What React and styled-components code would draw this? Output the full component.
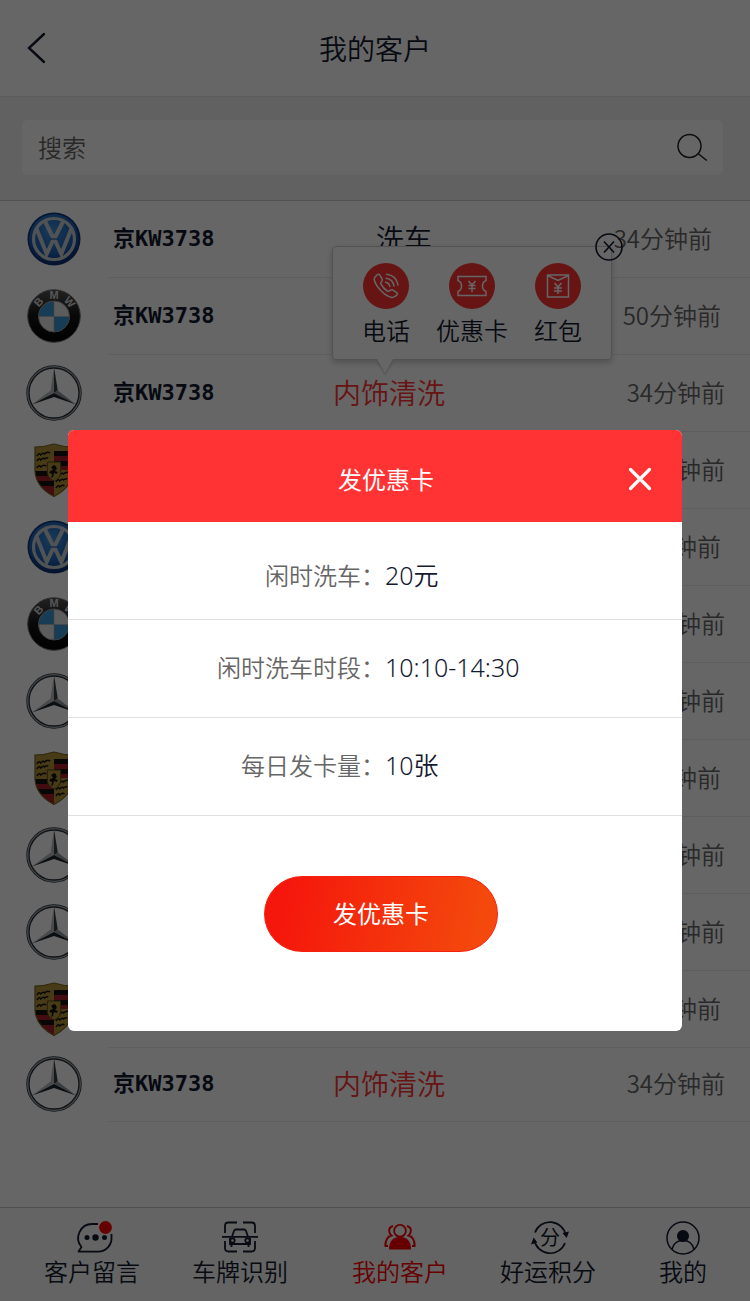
import React from 'react';
import styled, { createGlobalStyle } from 'styled-components';

const cjk = '"Noto Sans CJK SC", sans-serif';
const ink = '#141a30';

const GlobalStyle = createGlobalStyle`
  *, *::before, *::after { box-sizing: border-box; }
  body {
    margin: 0;
    background: #fff;
    color: ${ink};
    font-family: ${cjk};
    font-weight: 350;
  }
  button, input { font: inherit; color: inherit; }
  button { padding: 0; border: 0; background: none; cursor: pointer; }
  svg { display: block; }
`;

const Screen = styled.div`
  position: relative;
  display: flex;
  flex-direction: column;
  min-height: 100vh;
`;

const TopBar = styled.header`
  display: grid;
  grid-template-columns: 1fr auto 1fr;
  align-items: center;
  height: 97px;
  padding: 0 24px;
  border-bottom: 1px solid #e6e6e6;
`;

const PageTitle = styled.h1`
  margin: 0;
  font-size: 28px;
  font-weight: 350;
  line-height: 40px;
`;

const BackButton = styled.button`
  justify-self: start;
`;

const SearchArea = styled.form`
  padding: 23px 27px 25px 22px;
  background: #f3f3f3;
  border-bottom: 1px solid #cfcfcf;
`;

const SearchBox = styled.div`
  display: flex;
  align-items: center;
  height: 55px;
  padding: 0 15px 2px 16px;
  border-radius: 6px;
  background: #fff;
`;

const SearchInput = styled.input`
  flex: 1;
  min-width: 0;
  padding: 0;
  border: 0;
  outline: 0;
  background: transparent;
  font-size: 24px;
  &::placeholder { color: #666; opacity: 1; }
`;

const List = styled.ul`
  flex: 1;
  margin: 0;
  padding: 0 0 85px;
  list-style: none;
`;

const Row = styled.li`
  position: relative;
  display: flex;
  height: 77px;
  &:last-child { height: 74px; }
`;

const LogoCell = styled.div`
  display: flex;
  align-items: center;
  justify-content: center;
  width: 108px;
  padding-bottom: 2px;
`;

const RowBody = styled.div`
  flex: 1;
  display: grid;
  grid-template-columns: 220px 1fr auto;
  align-items: center;
  padding: 0 ${p => p.$inset}px 3px 5px;
  border-bottom: 1px solid #ebebeb;
  line-height: 36px;
`;

const Plate = styled.span`
  padding-top: 2px;
  font-family: "DejaVu Sans Mono", ${cjk};
  font-size: 22px;
  font-weight: 700;
`;

const Service = styled.span`
  padding-left: ${p => (p.$short ? 43 : 0)}px;
  font-size: 28px;
  color: ${p => (p.$short ? ink : '#ff3333')};
`;

const Time = styled.time`
  font-size: 24px;
  color: #666;
`;

const Popover = styled.div`
  position: absolute;
  left: 332px;
  bottom: 72px;
  z-index: 1;
  width: 280px;
  height: 114px;
  border: 1px solid #ccc;
  border-radius: 4px;
  background: #fff;
  box-shadow: 0 3px 6px rgba(0, 0, 0, 0.2);
  &::after {
    content: '';
    position: absolute;
    left: 44px;
    top: 112px;
    border: 8px solid transparent;
    border-top: 14px solid #fff;
    border-bottom: 0;
    filter: drop-shadow(0 2px 1px rgba(0, 0, 0, 0.2));
  }
`;

const PopoverActions = styled.div`
  display: flex;
  justify-content: space-between;
  padding: 16px 29px 0;
`;

const PopoverAction = styled.button`
  display: flex;
  flex-direction: column;
  align-items: center;
  gap: 5px;
  font-size: 24px;
  line-height: 32px;
`;

const PopoverIcon = styled.span`
  display: grid;
  place-items: center;
  width: 46px;
  height: 46px;
  border-radius: 50%;
  background: #ff3333;
`;

const PopoverClose = styled.button`
  position: absolute;
  right: -12px;
  top: -14px;
`;

const TabBar = styled.nav`
  display: grid;
  grid-template-columns: 136fr 160fr 160fr 136fr 134fr;
  height: 94px;
  padding: 13px 0 0 24px;
  border-top: 1px solid #c4c4c4;
  background: #fafafa;
`;

const Tab = styled.a`
  display: flex;
  flex-direction: column;
  align-items: center;
  gap: 2px;
  color: ${p => (p.$active ? '#ff0000' : ink)};
  font-size: 24px;
  line-height: 32px;
  text-decoration: none;
  white-space: nowrap;
`;

const TabIcon = styled.span`
  display: grid;
  place-items: center;
  height: 32px;
`;

const Overlay = styled.div`
  position: absolute;
  inset: 0;
  z-index: 2;
  padding: 430px 68px 0;
  background: rgba(0, 0, 0, 0.6);
`;

const Dialog = styled.section`
  overflow: hidden;
  border-radius: 6px;
  background: #fff;
`;

const DialogHeader = styled.header`
  display: grid;
  grid-template-columns: 1fr auto 1fr;
  align-items: center;
  height: 92px;
  padding: 6px 30px 0 52px;
  background: #ff3333;
  color: #fff;
`;

const DialogTitle = styled.h2`
  grid-column: 2;
  margin: 0;
  font-size: 24px;
  font-weight: 400;
  line-height: 36px;
`;

const DialogClose = styled.button`
  justify-self: end;
`;

const Details = styled.dl`
  margin: 0;
`;

const Detail = styled.div`
  display: grid;
  grid-template-columns: 317fr 297fr;
  align-items: center;
  height: 98px;
  padding-bottom: 3px;
  border-bottom: 1px solid #e0e0e0;
  line-height: 36px;
  &:first-child { padding-top: 12px; }
`;

const DetailLabel = styled.dt`
  font-size: 24px;
  color: #666;
  text-align: right;
`;

const DetailValue = styled.dd`
  margin: 0;
  font-family: "Noto Sans", ${cjk};
  font-size: 25px;
`;

const DialogFooter = styled.footer`
  display: flex;
  justify-content: center;
  padding: 60px 0 79px 12px;
`;

const SendButton = styled.button`
  width: 234px;
  height: 76px;
  padding-bottom: 3px;
  border: 1px solid #f5200f;
  border-radius: 38px;
  background: linear-gradient(100deg, #f5170c 10%, #f4480c 90%);
  color: #fff;
  font-size: 24px;
  font-weight: 400;
`;

function VwLogo() {
  return (
    <svg width="54" height="54" viewBox="0 0 54 54" aria-hidden="true">
      <defs>
        <radialGradient id="vwBlue" cx=".45" cy=".35" r=".65">
          <stop offset="0" stopColor="#3f92dd" />
          <stop offset=".7" stopColor="#1c5fb4" />
          <stop offset="1" stopColor="#0c2f70" />
        </radialGradient>
      </defs>
      <circle cx="27" cy="27" r="26.5" fill="#0d3478" />
      <circle cx="27" cy="27" r="25" fill="url(#vwBlue)" />
      <circle cx="27" cy="27" r="20.5" fill="none" stroke="#c9cdd2" strokeWidth="3.2" />
      <g fill="none" stroke="#c9cdd2" strokeWidth="4" strokeLinejoin="miter">
        <path d="M17.500 8.500L26 25.500h2L36.500 8.500" />
        <path d="M9.500 16.500L19.700 42L26 28.500h2L34.300 42L44.500 16.500" />
      </g>
      <path d="M23 27h8" stroke="#1c5fb4" strokeWidth="1.200" />
    </svg>
  );
}

function BmwLogo() {
  return (
    <svg width="54" height="54" viewBox="0 0 54 54" aria-hidden="true">
      <defs>
        <linearGradient id="bmwRing" x1="0" y1="0" x2="0" y2="1">
          <stop offset="0" stopColor="#555" />
          <stop offset=".5" stopColor="#151515" />
          <stop offset="1" stopColor="#050505" />
        </linearGradient>
      </defs>
      <circle cx="27" cy="27" r="26.300" fill="url(#bmwRing)" stroke="#777" strokeWidth="1" />
      <circle cx="27" cy="27.500" r="15.500" fill="#e6e6e6" />
      <path d="M27 27.500V12A15.500 15.500 0 0 0 11.500 27.500z M27 27.500V43A15.500 15.500 0 0 0 42.500 27.500z" fill="#3a97d8" />
      <path d="M27 12v31M11.500 27.500h31" stroke="#aaa" strokeWidth=".7" />
      <circle cx="27" cy="27.500" r="15.500" fill="none" stroke="#999" />
      <g fill="#d8d8d8" fontFamily="Liberation Sans" fontWeight="700" fontSize="11" textAnchor="middle">
        <text x="27" y="10">M</text>
        <text x="27" y="10" transform="rotate(-48 27 27)">B</text>
        <text x="27" y="10" transform="rotate(48 27 27)">W</text>
      </g>
    </svg>
  );
}

function BenzLogo() {
  return (
    <svg width="56" height="56" viewBox="0 0 56 56" aria-hidden="true">
      <circle cx="28" cy="28" r="26" fill="none" stroke="#2b3238" strokeWidth="3.400" />
      <circle cx="28" cy="28" r="26.300" fill="none" stroke="#a9afb4" strokeWidth="1.300" />
      <path d="M28 2L24.600 25.500L28 28z" fill="#b4b8bb" />
      <path d="M28 2L31.800 25.500L28 28z" fill="#3a4147" />
      <path d="M6 39.500L24.600 25.500L28 28z" fill="#b4b8bb" />
      <path d="M6 39.500L28 32L28 28z" fill="#1f262c" />
      <path d="M50 39.500L31.800 25.500L28 28z" fill="#92989d" />
      <path d="M50 39.500L28 32L28 28z" fill="#1f262c" />
    </svg>
  );
}

function PorscheLogo() {
  return (
    <svg width="40" height="54" viewBox="0 0 42 54" preserveAspectRatio="none" aria-hidden="true">
      <defs>
        <clipPath id="crest">
          <path d="M1 4Q11 4 21 1Q31 4 41 4V28Q40 44 21 53.500Q2 44 1 28z" />
        </clipPath>
      </defs>
      <g clipPath="url(#crest)">
        <path d="M0 0h42v54H0z" fill="#b0923a" />
        <path d="M21 8h21v5H21zM21 18h21v5H21zM0 28h21v5H0zM0 38h21v5H0z" fill="#17130e" />
        <path d="M21 13h21v5H21zM21 23h21v4H21zM0 33h21v5H0zM0 43h21v11H0z" fill="#a8202b" />
        <g fill="none" stroke="#17130e" strokeWidth="1.400">
          <path d="M3 13q3-4 4-1q3-3 4-1q3-3 6-1M3 18q3-4 4-1q3-3 4-1q2-2 4-1M3 25q3-4 4-1q3-3 6-1" />
          <path d="M23 33q3-4 4-1q3-3 4-1q3-3 6-1M23 39q3-4 4-1q3-3 4-1q2-2 4-1M23 45q3-4 4-1q3-3 5-1" />
        </g>
      </g>
      <path d="M14 19h14v11q-1 6-7 8q-6-2-7-8z" fill="#b0923a" stroke="#5c4a17" strokeWidth="1" />
      <path d="M18 24l3-2 2 1 1 3-2 2 3 1-1 2-3-1-1 4-2 1 1-4-3-1 1-2 3-1z" fill="#17130e" />
      <path d="M1 4Q11 4 21 1Q31 4 41 4V28Q40 44 21 53.500Q2 44 1 28z" fill="none" stroke="#7d6620" strokeWidth="1.200" />
    </svg>
  );
}

const logos = { vw: VwLogo, bmw: BmwLogo, benz: BenzLogo, porsche: PorscheLogo };

function PhoneIcon() {
  return (
    <svg width="26" height="26" viewBox="0 0 26 26" fill="none" stroke="#fff" strokeWidth="1.500" strokeLinecap="round" strokeLinejoin="round" aria-hidden="true">
      <path d="M2.500 3.500L4.500 1.500Q6 .8 7 2.300L9.200 6.200Q9.700 7.500 8.600 8.500Q7.300 9.700 8 11.200Q10.300 15.600 14.300 18Q16 18.800 17 17.500Q18.200 16.200 19.500 16.900L23.500 19.300Q25 20.400 24 21.800Q21.500 25 18.300 24.400Q13 23 8 17.800Q2.500 12 1.300 7Q1 5 2.500 3.500z" />
      <path d="M12.500 9.200q3.700.6 4.300 4.300M13 5.200q7 .9 8 7.800M13.500 1.200q10 1.200 11.500 10.800" />
    </svg>
  );
}

function CouponIcon() {
  return (
    <svg width="30" height="22" viewBox="0 0 30 22" fill="none" stroke="#fff" strokeWidth="1.500" aria-hidden="true">
      <path d="M1 1.500h28v4q-3.500 1.500-3.500 5.500t3.500 5.500v4H1v-4q3.500-1.500 3.500-5.500T1 5.500z" />
      <path d="M11.500 6l3.500 4 3.500-4M15 10v7M11.500 10.500h7M11.500 13.500h7" />
    </svg>
  );
}

function RedPacketIcon() {
  return (
    <svg width="24" height="24" viewBox="0 0 24 24" fill="none" stroke="#fff" strokeWidth="1.500" aria-hidden="true">
      <path d="M1.500 1h21v22h-21z" />
      <path d="M1.500 1.500L12 6.500L22.500 1.500M8.500 9l3.500 4 3.500-4M12 13v7M8 14h8M8 17h8" />
    </svg>
  );
}

function MessageIcon() {
  return (
    <svg width="42" height="32" viewBox="-6 0 42 32" fill="none" stroke="currentColor" strokeWidth="1.800" aria-hidden="true">
      <path d="M21 3H15.500A14 14 0 0 0 4.500 26L1.500 30.600H21A13.500 13.500 0 0 0 34.500 16V13" strokeLinejoin="round" />
      <g fill="currentColor" stroke="none">
        <circle cx="10" cy="16.500" r="2.500" />
        <circle cx="18.500" cy="16.500" r="3.200" />
        <circle cx="27.500" cy="16.500" r="2.500" />
      </g>
      <circle cx="28.500" cy="6.500" r="6.400" fill="#ff0000" stroke="none" />
    </svg>
  );
}

function PlateScanIcon() {
  return (
    <svg width="36" height="32" viewBox="0 0 36 32" fill="none" stroke="currentColor" strokeWidth="1.800" aria-hidden="true">
      <path d="M15 1.500H6.500Q3 1.500 3 5v7M21 1.500h8.500Q33 1.500 33 5v7M3 20v7q0 3.500 3.500 3.500H15M33 20v7q0 3.500-3.500 3.500H21" />
      <path d="M0 15.800h36M10 15.500l2.200-6Q12.500 8.500 14 8.500h8q1.500 0 1.800 1l2.200 6M8 17v6h20v-6M9.500 23v3M26.500 23v3" />
      <circle cx="10.500" cy="19.500" r="2.200" />
      <circle cx="25.500" cy="19.500" r="2.200" />
    </svg>
  );
}

function CustomersIcon() {
  return (
    <svg width="32" height="32" viewBox="0 0 32 32" fill="none" stroke="currentColor" strokeWidth="1.900" aria-hidden="true">
      <circle cx="16" cy="9.800" r="5.900" />
      <path d="M5 28.500q0-12.500 11-12.500t11 12.500z" fill="currentColor" stroke="none" />
      <path d="M9 5Q4 6.500 5.500 11.500Q6.200 13.500 7.500 14.500Q1.500 16 1.300 25M4 25H.5M23 5Q28 6.500 26.500 11.500Q25.800 13.500 24.500 14.500Q30.500 16 30.700 25M28 25h3.500" />
    </svg>
  );
}

function PointsIcon() {
  return (
    <svg width="42" height="34" viewBox="-3 0 40 34" fill="none" stroke="currentColor" strokeWidth="1.700" aria-hidden="true">
      <path d="M4 11.500A16 16 0 0 1 34.700 14M34 22A16 16 0 0 1 3.300 19" />
      <path d="M31.500 12l4.200 5L38 10.500zM0 23.500l2.600-7 3.700 5z" fill="currentColor" stroke="none" />
      <text x="19" y="24" textAnchor="middle" fontSize="20" fontWeight="400" fill="currentColor" stroke="none">分</text>
    </svg>
  );
}

function ProfileIcon() {
  return (
    <svg width="34" height="34" viewBox="0 0 34 34" fill="none" stroke="currentColor" strokeWidth="1.500" aria-hidden="true">
      <circle cx="17" cy="17" r="16" />
      <circle cx="17" cy="15" r="5.300" fill="currentColor" />
      <path d="M6 28.500Q8 19.500 17 19.500T28 28.500" />
    </svg>
  );
}

const customers = [
  { logo: 'vw', service: '洗车', time: '34分钟前', inset: 38 },
  { logo: 'bmw', time: '50分钟前', inset: 29 },
  { logo: 'benz', service: '内饰清洗', time: '34分钟前', inset: 25, open: true },
  { logo: 'porsche', time: '34分钟前', inset: 25 },
  { logo: 'vw', time: '34分钟前', inset: 29 },
  { logo: 'bmw', time: '34分钟前', inset: 25 },
  { logo: 'benz', time: '34分钟前', inset: 25 },
  { logo: 'porsche', time: '34分钟前', inset: 29 },
  { logo: 'benz', time: '34分钟前', inset: 25 },
  { logo: 'benz', time: '34分钟前', inset: 25 },
  { logo: 'porsche', time: '34分钟前', inset: 29 },
  { logo: 'benz', service: '内饰清洗', time: '34分钟前', inset: 25 },
];

const actions = [
  { label: '电话', Icon: PhoneIcon },
  { label: '优惠卡', Icon: CouponIcon },
  { label: '红包', Icon: RedPacketIcon },
];

const tabs = [
  { label: '客户留言', Icon: MessageIcon },
  { label: '车牌识别', Icon: PlateScanIcon },
  { label: '我的客户', Icon: CustomersIcon, active: true },
  { label: '好运积分', Icon: PointsIcon },
  { label: '我的', Icon: ProfileIcon },
];

const details = [
  ['闲时洗车：', '20元'],
  ['闲时洗车时段：', '10:10-14:30'],
  ['每日发卡量：', '10张'],
];

function ActionPopover() {
  return (
    <Popover>
      <PopoverActions>
        {actions.map(({ label, Icon }) => (
          <PopoverAction key={label} type="button">
            <PopoverIcon><Icon /></PopoverIcon>
            {label}
          </PopoverAction>
        ))}
      </PopoverActions>
      <PopoverClose type="button" aria-label="关闭">
        <svg width="28" height="28" viewBox="0 0 28 28" fill="none" stroke={ink} strokeWidth="1.600">
          <circle cx="14" cy="14" r="13" />
          <path d="M9 8.500l10 11M19 8.500l-10 11" />
        </svg>
      </PopoverClose>
    </Popover>
  );
}

function CustomerRow({ logo, service = '', time, inset, open }) {
  const Logo = logos[logo];
  return (
    <Row>
      <LogoCell><Logo /></LogoCell>
      <RowBody $inset={inset}>
        <Plate>京KW3738</Plate>
        <Service $short={service.length === 2}>{service}</Service>
        <Time>{time}</Time>
      </RowBody>
      {open && <ActionPopover />}
    </Row>
  );
}

export default function App() {
  return (
    <>
      <GlobalStyle />
      <Screen>
        <TopBar>
          <BackButton type="button" aria-label="返回">
            <svg width="24" height="32" viewBox="0 0 24 32" fill="none" stroke={ink} strokeWidth="2.400" strokeLinecap="round">
              <path d="M20 2L5 16L20 30" />
            </svg>
          </BackButton>
          <PageTitle>我的客户</PageTitle>
        </TopBar>
        <SearchArea onSubmit={e => e.preventDefault()}>
          <SearchBox>
            <SearchInput type="search" placeholder="搜索" aria-label="搜索" />
            <button type="submit" aria-label="搜索">
              <svg width="32" height="28" viewBox="0 0 32 28" fill="none" stroke="#222" strokeWidth="1.500">
                <circle cx="13.500" cy="13" r="11.500" />
                <path d="M22 20.500l8.800 7" />
              </svg>
            </button>
          </SearchBox>
        </SearchArea>
        <List>
          {customers.map((customer, i) => <CustomerRow key={i} {...customer} />)}
        </List>
        <TabBar>
          {tabs.map(({ label, Icon, active }) => (
            <Tab key={label} href="#" $active={active} aria-current={active ? 'page' : undefined}>
              <TabIcon><Icon /></TabIcon>
              {label}
            </Tab>
          ))}
        </TabBar>
        <Overlay>
          <Dialog role="dialog" aria-modal="true" aria-labelledby="dialog-title">
            <DialogHeader>
              <DialogTitle id="dialog-title">发优惠卡</DialogTitle>
              <DialogClose type="button" aria-label="关闭">
                <svg width="24" height="24" viewBox="0 0 24 24" fill="none" stroke="#fff" strokeWidth="3.200" strokeLinecap="round">
                  <path d="M2.500 2.500L21.500 21.500M21.500 2.500L2.500 21.500" />
                </svg>
              </DialogClose>
            </DialogHeader>
            <Details>
              {details.map(([label, value]) => (
                <Detail key={label}>
                  <DetailLabel>{label}</DetailLabel>
                  <DetailValue>{value}</DetailValue>
                </Detail>
              ))}
            </Details>
            <DialogFooter>
              <SendButton type="button">发优惠卡</SendButton>
            </DialogFooter>
          </Dialog>
        </Overlay>
      </Screen>
    </>
  );
}
